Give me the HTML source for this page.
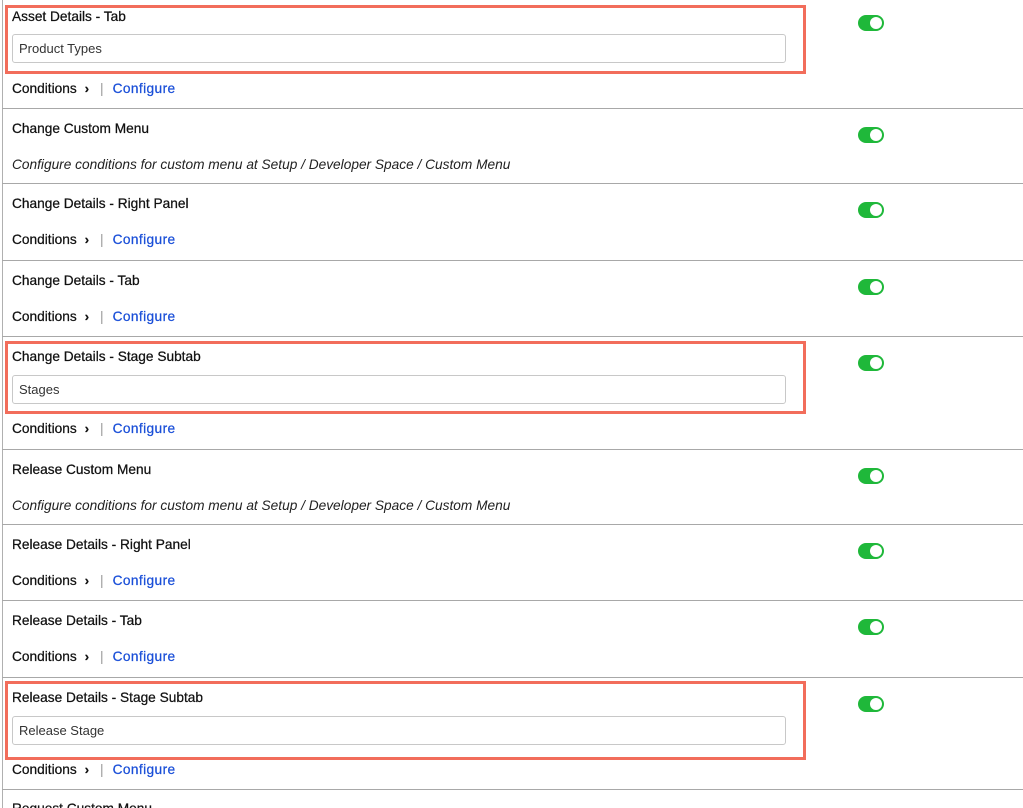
<!DOCTYPE html>
<html><head><meta charset="utf-8"><style>
html,body{margin:0;width:1023px;height:808px;overflow:hidden}
body{background:#fff;position:relative;font-family:"Liberation Sans",sans-serif;font-size:13.7px;color:#111}
.a{position:absolute;white-space:nowrap;line-height:16px}
.t{left:12px;-webkit-text-stroke:0.25px #111}
.sep{position:absolute;left:2px;right:0;height:1px;background:#a8a8a8}
.vl{position:absolute;left:2px;top:0;width:1px;height:808px;background:#b0b0b0}
.red{position:absolute;left:5px;width:795px;border:3px solid #f26d5b;box-sizing:content-box}
.inp{position:absolute;left:12px;width:774px;height:29px;border:1px solid #c8c8c8;border-radius:3px;box-sizing:border-box;padding-left:6px;line-height:27px;color:#333;font-size:13px;background:#fff}
.tg{position:absolute;left:858px;width:26px;height:16px;border-radius:8px;background:#1fb83a}
.tg:after{content:"";position:absolute;right:2px;top:2px;width:12px;height:12px;border-radius:50%;background:#fff}
.c{top:0}
.c .ch{display:inline-block;margin:0 11px 0 8px;font-size:13px;font-weight:bold}
.c .bar{color:#999;margin-right:9px;-webkit-text-stroke:0}
.c .cf{color:#1a4fd8;-webkit-text-stroke:0.25px #1a4fd8;letter-spacing:0.4px}
.i{font-style:italic;color:#222;-webkit-text-stroke:0}
</style></head><body>
<div class="vl"></div>

<div class="red" style="top:5px;height:63px"></div>
<div class="a t" style="top:9px">Asset Details - Tab</div>
<div class="inp" style="top:34px">Product Types</div>
<div class="a t c" style="top:81px">Conditions<span class="ch">›</span><span class="bar">|</span><span class="cf">Configure</span></div>
<div class="tg" style="top:15px"></div>
<div class="sep" style="top:108px"></div>

<div class="a t" style="top:121px">Change Custom Menu</div>
<div class="a t i" style="top:157px">Configure conditions for custom menu at Setup / Developer Space / Custom Menu</div>
<div class="tg" style="top:127px"></div>
<div class="sep" style="top:183px"></div>

<div class="a t" style="top:196px">Change Details - Right Panel</div>
<div class="a t c" style="top:232px">Conditions<span class="ch">›</span><span class="bar">|</span><span class="cf">Configure</span></div>
<div class="tg" style="top:202px"></div>
<div class="sep" style="top:260px"></div>

<div class="a t" style="top:273px">Change Details - Tab</div>
<div class="a t c" style="top:309px">Conditions<span class="ch">›</span><span class="bar">|</span><span class="cf">Configure</span></div>
<div class="tg" style="top:279px"></div>
<div class="sep" style="top:336px"></div>

<div class="red" style="top:341px;height:67px"></div>
<div class="a t" style="top:349px">Change Details - Stage Subtab</div>
<div class="inp" style="top:375px">Stages</div>
<div class="a t c" style="top:421px">Conditions<span class="ch">›</span><span class="bar">|</span><span class="cf">Configure</span></div>
<div class="tg" style="top:355px"></div>
<div class="sep" style="top:449px"></div>

<div class="a t" style="top:462px">Release Custom Menu</div>
<div class="a t i" style="top:498px">Configure conditions for custom menu at Setup / Developer Space / Custom Menu</div>
<div class="tg" style="top:468px"></div>
<div class="sep" style="top:524px"></div>

<div class="a t" style="top:537px">Release Details - Right Panel</div>
<div class="a t c" style="top:573px">Conditions<span class="ch">›</span><span class="bar">|</span><span class="cf">Configure</span></div>
<div class="tg" style="top:543px"></div>
<div class="sep" style="top:600px"></div>

<div class="a t" style="top:613px">Release Details - Tab</div>
<div class="a t c" style="top:649px">Conditions<span class="ch">›</span><span class="bar">|</span><span class="cf">Configure</span></div>
<div class="tg" style="top:619px"></div>
<div class="sep" style="top:677px"></div>

<div class="red" style="top:681px;height:73px"></div>
<div class="a t" style="top:690px">Release Details - Stage Subtab</div>
<div class="inp" style="top:716px">Release Stage</div>
<div class="a t c" style="top:762px">Conditions<span class="ch">›</span><span class="bar">|</span><span class="cf">Configure</span></div>
<div class="tg" style="top:696px"></div>
<div class="sep" style="top:789px"></div>

<div class="a t" style="top:801px">Request Custom Menu</div>
</body></html>
